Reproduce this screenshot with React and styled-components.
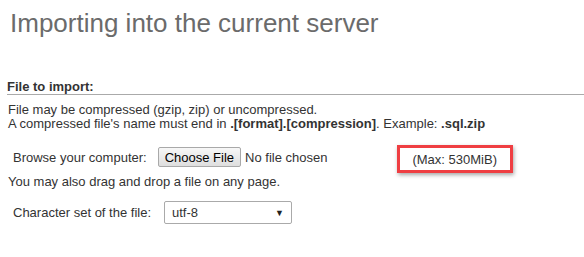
import styled, { createGlobalStyle } from "styled-components";

const GlobalStyle = createGlobalStyle`
  body {
    margin: 0;
    background: #fff;
    font-family: "Liberation Sans", Arial, sans-serif;
    font-size: 13px;
    color: #333;
  }
`;

const Page = styled.div`
  padding: 8px 0 0 0;
  width: 584px;
  height: 257px;
  box-sizing: border-box;
  overflow: hidden;
`;

const Title = styled.h2`
  margin: 0 0 0 10px;
  font-size: 26px;
  line-height: 30px;
  font-weight: normal;
  color: #6b6b6b;
`;

const Section = styled.div`
  margin: 41px 0 0 7px;
`;

const Legend = styled.div`
  font-weight: bold;
  line-height: 15px;
  color: #333;
  border-bottom: 1px solid #aaa;
`;

const Note = styled.p`
  margin: 8px 0 0 1px;
  line-height: 14px;

  b {
    font-weight: bold;
  }
`;

const Row = styled.div`
  display: flex;
  align-items: center;
  margin: ${(p) => p.$top}px 0 0 6px;
`;

const Label = styled.span`
  margin-right: ${(p) => p.$gap}px;
`;

const FileButton = styled.button`
  height: 20px;
  padding: 0 6px;
  font-family: inherit;
  font-size: 13px;
  color: #000;
  border: 1px solid #a9a9a9;
  border-radius: 2px;
  background: linear-gradient(#f7f7f7, #dedede);
`;

const NoFile = styled.span`
  margin-left: 4px;
`;

const MaxBox = styled.span`
  margin: -2px 0 -6px 70px;
  height: 28px;
  box-sizing: border-box;
  padding: 0 13px 0 12px;
  display: flex;
  align-items: center;
  border: 3px solid #ef3e42;
  box-shadow: 1px 2px 4px rgba(0, 0, 0, 0.35);
`;

const Hint = styled.div`
  margin: 8px 0 0 1px;
  line-height: 14px;
`;

const Select = styled.div`
  width: 128px;
  height: 23px;
  box-sizing: border-box;
  display: flex;
  align-items: center;
  justify-content: space-between;
  padding: 0 7px 0 7px;
  border: 1px solid #aaa;
  border-radius: 2px;
  color: #333;
`;

const Arrow = styled.span`
  font-size: 9px;
  color: #222;
`;

export default function App() {
  return (
    <Page>
      <GlobalStyle />
      <Title>Importing into the current server</Title>
      <Section>
        <Legend>File to import:</Legend>
        <Note>
          File may be compressed (gzip, zip) or uncompressed.
          <br />
          A compressed file's name must end in <b>.[format].[compression]</b>.
          Example: <b>.sql.zip</b>
        </Note>
        <Row $top={16}>
          <Label $gap={11}>Browse your computer:</Label>
          <FileButton>Choose File</FileButton>
          <NoFile>No file chosen</NoFile>
          <MaxBox>(Max: 530MiB)</MaxBox>
        </Row>
        <Hint>You may also drag and drop a file on any page.</Hint>
        <Row $top={12}>
          <Label $gap={13}>Character set of the file:</Label>
          <Select>
            utf-8
            <Arrow>▼</Arrow>
          </Select>
        </Row>
      </Section>
    </Page>
  );
}
